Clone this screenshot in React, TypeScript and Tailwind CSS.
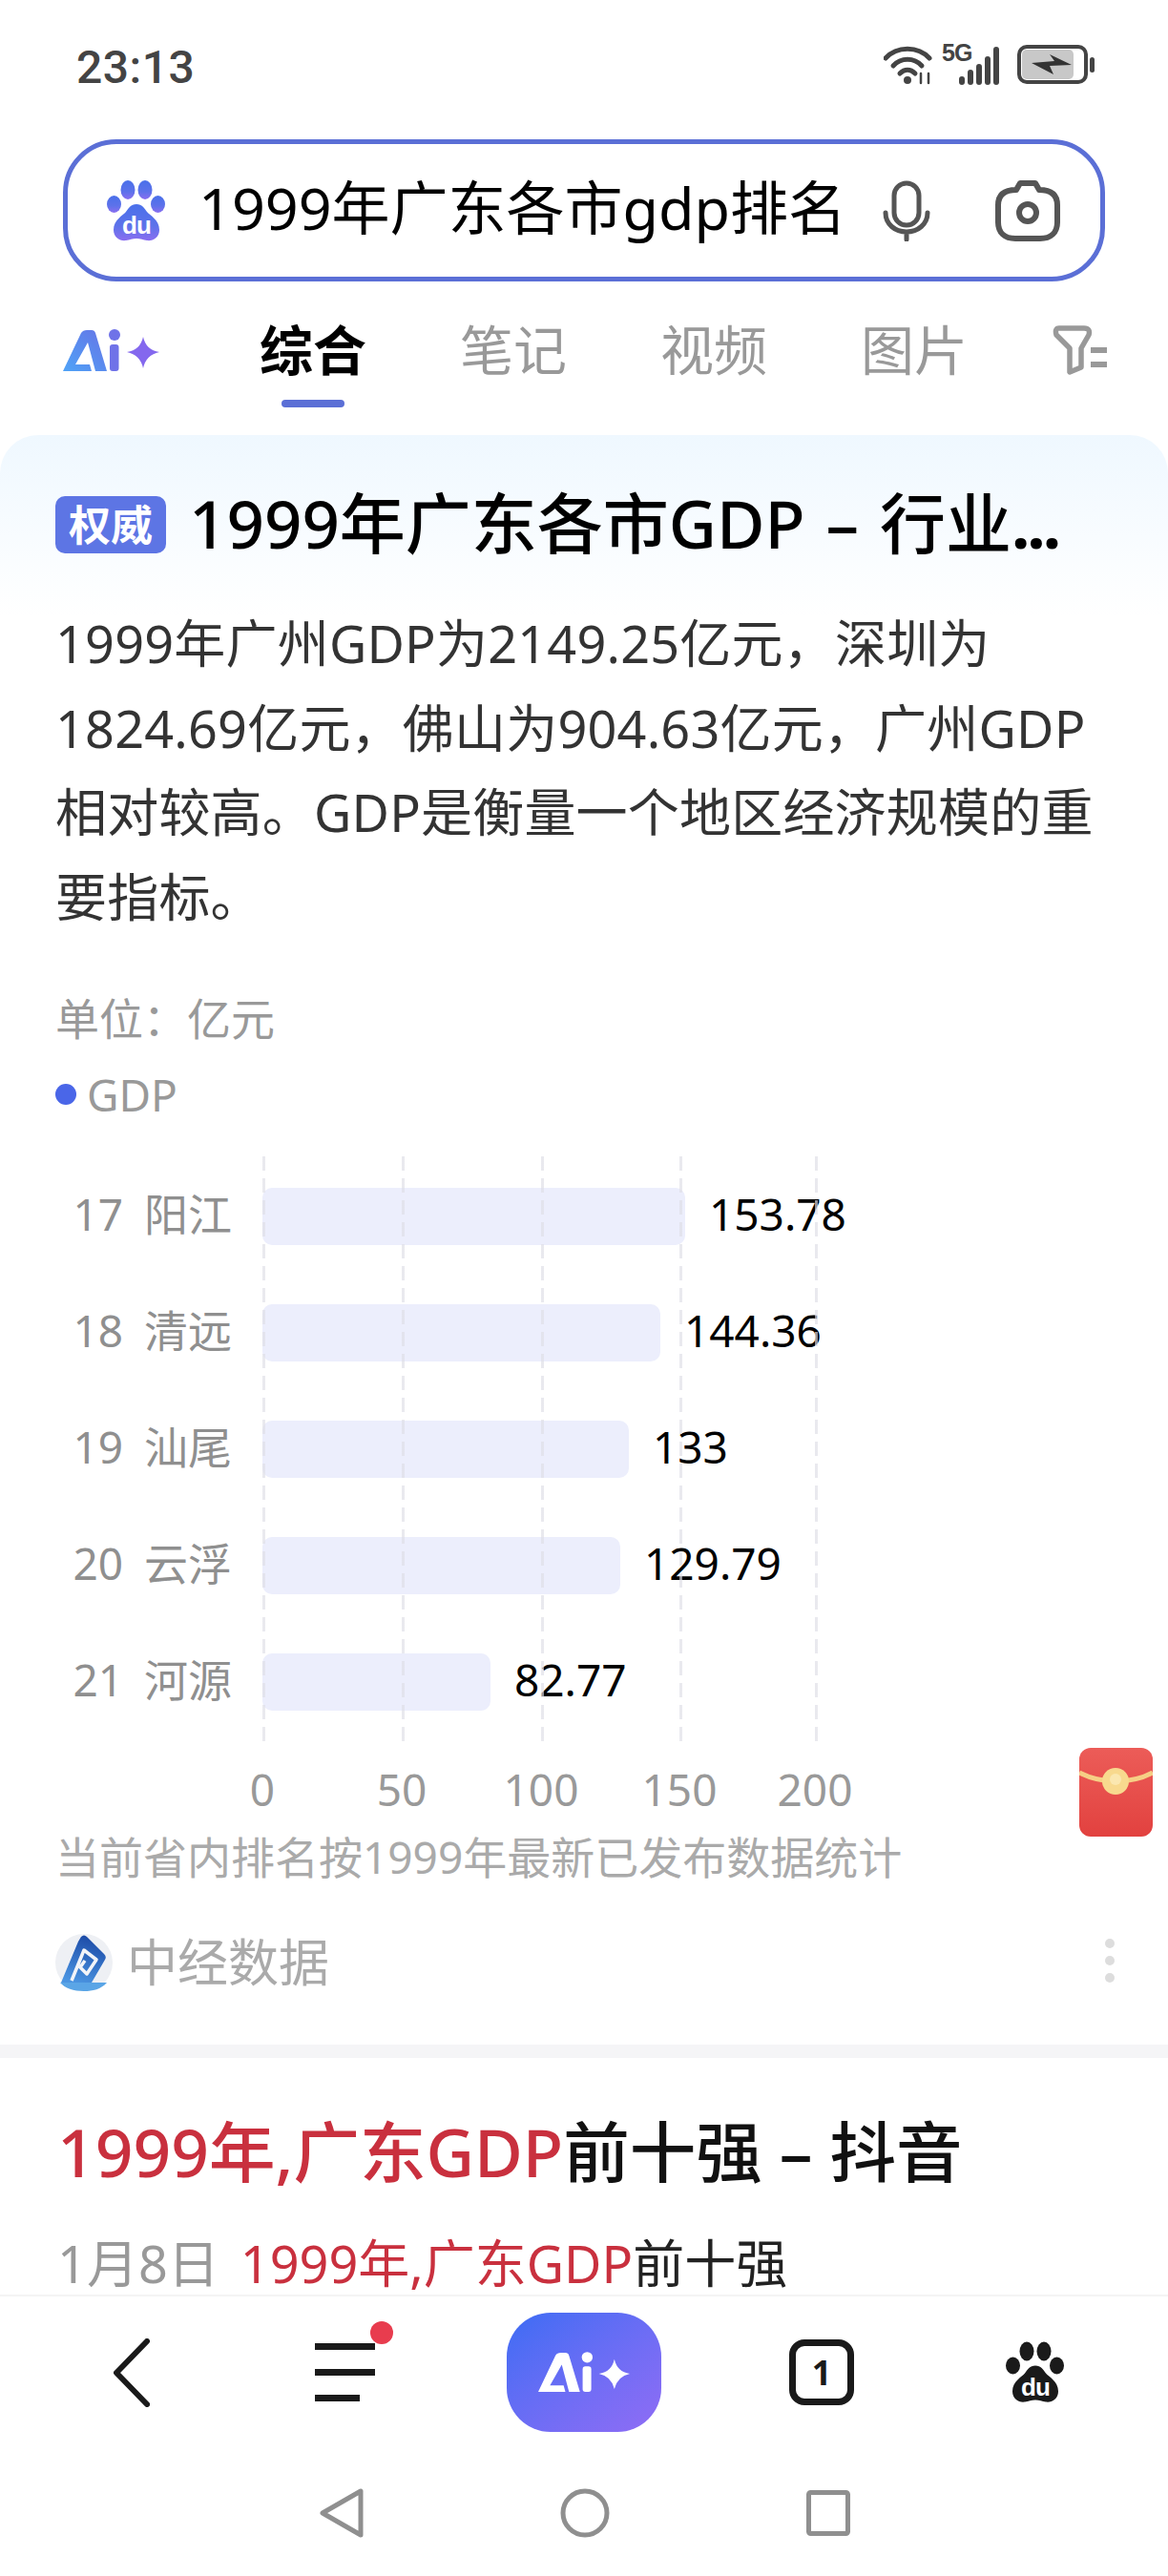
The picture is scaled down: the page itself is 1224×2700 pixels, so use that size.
const font = "font-['Noto_Sans','Noto_Sans_CJK_SC',sans-serif]"

const rows = [
  { rank: 17, city: '阳江', width: 443, value: '153.78' },
  { rank: 18, city: '清远', width: 417, value: '144.36' },
  { rank: 19, city: '汕尾', width: 384, value: '133' },
  { rank: 20, city: '云浮', width: 375, value: '129.79' },
  { rank: 21, city: '河源', width: 239, value: '82.77' },
]

const ticks = [
  { label: '0', x: 217 },
  { label: '50', x: 363 },
  { label: '100', x: 509 },
  { label: '150', x: 654 },
  { label: '200', x: 796 },
]

function Paw({ mono }: { mono?: boolean }) {
  const fill = mono ? '#1a1a1a' : 'url(#paw-grad)'
  return (
    <svg viewBox="0 0 61 64" className="w-full h-full">
      <defs>
        <linearGradient id="paw-grad" x1="0" y1="0" x2="0" y2="1">
          <stop offset="0" stopColor="#4a70ea" />
          <stop offset="0.6" stopColor="#5d72ea" />
          <stop offset="1" stopColor="#8a6ef0" />
        </linearGradient>
      </defs>
      <ellipse cx="7.5" cy="25" rx="7.5" ry="9" fill={fill} />
      <ellipse cx="22" cy="10" rx="7.5" ry="10" fill={fill} />
      <ellipse cx="40" cy="10" rx="7.5" ry="10" fill={fill} />
      <ellipse cx="53.5" cy="25" rx="7.5" ry="9" fill={fill} />
      <path d="M31 25c6 0 8 4 11 8 3 4 13 8 13 19 0 8-7 12-13 11-4-.7-7-2-11-2s-7 1.300-11 2c-6 1-13-3-13-11 0-11 10-15 13-19 3-4 5-8 11-8z" fill={fill} />
      <text x="31" y="56" textAnchor="middle" fontSize="26" fontWeight="700" fill="#fff" fontFamily="Liberation Sans, sans-serif" letterSpacing="-1">du</text>
    </svg>
  )
}

function AiMark({ white }: { white?: boolean }) {
  const a = white ? '#ffffff' : 'url(#ai-a)'
  const i = white ? '#ffffff' : '#6f72e8'
  const star = white ? '#ffffff' : '#8468ee'
  return (
    <svg viewBox="0 0 101 46" className="w-full h-full">
      <defs>
        <linearGradient id="ai-a" x1="0" y1="1" x2="1" y2="0">
          <stop offset="0" stopColor="#4fa3f7" />
          <stop offset="1" stopColor="#6674e6" />
        </linearGradient>
      </defs>
      <path d="M0 44 L19 4 Q21 1 25 1 L30 1 Q33 1 34 4 L46 44 L34 44 L26 14 L13 37 L28 37 L30 44 Z" fill={a} />
      <circle cx="54" cy="6" r="6" fill={i} />
      <rect x="49" y="16" width="9.500" height="28" rx="3" fill={i} />
      <path d="M84 8 Q87 22 101 24 Q87 27 84 41 Q81 27 67 24 Q81 22 84 8Z" fill={star} />
    </svg>
  )
}

function StatusIcons() {
  return (
    <div className="flex items-center text-[#444444]">
      <svg viewBox="0 0 52 42" className="w-[52px] h-[42px]" fill="none" stroke="#444" strokeLinecap="round">
        <path d="M2 14C14 1 36 1 48 14" strokeWidth="5" />
        <path d="M10 22C18 13 32 13 40 22" strokeWidth="5" />
        <path d="M17 30C22 25 28 25 33 30" strokeWidth="5" />
        <circle cx="25" cy="37" r="4" fill="#444" stroke="none" />
        <path d="M39 40V30M47 40V30" strokeWidth="2.500" />
      </svg>
      <div className="relative w-[60px] h-[42px] ml-[9px]">
        <span className="absolute left-0 top-[-5px] text-[25px] leading-[26px] font-bold tracking-[-1px] text-[#444] font-['Liberation_Sans',sans-serif]">5G</span>
        <div className="absolute right-0 bottom-0 flex items-end gap-[3px]">
          {[9, 16, 22, 30, 40].map(h => (
            <div key={h} className="w-[6px] rounded-[3px] bg-[#444]" style={{ height: h }} />
          ))}
        </div>
      </div>
      <svg viewBox="0 0 82 42" className="w-[82px] h-[42px] ml-[19px]">
        <rect x="2" y="2" width="70" height="37" rx="8" fill="#fff" stroke="#444" strokeWidth="4" />
        <rect x="5" y="5" width="54" height="31" rx="5" fill="#c8c8c8" />
        <path d="M15 19L39 17L34 10L57 21L34 22L38 31Z" fill="#333" />
        <rect x="76" y="13" width="5" height="16" rx="2.500" fill="#444" />
      </svg>
    </div>
  )
}

function Redpacket() {
  return (
    <div className="absolute left-[1131px] top-[1832px] w-[77px] h-[93px] rounded-[12px] bg-gradient-to-b from-[#ec5c58] to-[#e2413f] overflow-hidden">
      <svg viewBox="0 0 77 93" className="w-full h-full">
        <path d="M0 26C12 32 24 35 38 35C52 35 66 32 77 26" fill="none" stroke="#f6cf85" strokeWidth="5" />
        <circle cx="38" cy="35" r="14" fill="#f8d98e" />
        <circle cx="38" cy="33" r="6" fill="#fbe7b0" />
      </svg>
    </div>
  )
}

function SourceLogo() {
  return (
    <svg viewBox="0 0 60 60" className="w-[60px] h-[60px] shrink-0">
      <defs>
        <linearGradient id="src-grad" x1="0.6" y1="0" x2="0.3" y2="1">
          <stop offset="0" stopColor="#1c4aa6" />
          <stop offset="1" stopColor="#4b95e2" />
        </linearGradient>
      </defs>
      <circle cx="30" cy="30" r="30" fill="#eef0f4" />
      <path d="M27 3Q30 0 33 3L51 21Q54 24 52 27L38 51H6L24 8Z" fill="url(#src-grad)" />
      <path d="M17 49L30 17L43 27L33 42L26 35L31 28" fill="none" stroke="#f2f4f8" strokeWidth="3.500" strokeLinejoin="round" />
      <path d="M5 51H54C48 58 39 60 30 60C19 60 10 57 5 51Z" fill="#5aa5e6" />
    </svg>
  )
}

export default function App() {
  return (
    <div className={`relative w-[1224px] h-[2700px] bg-white overflow-hidden flex flex-col ${font}`}>
      {/* status bar */}
      <div className="h-[146px] shrink-0 flex items-start justify-between pl-[80px] pr-[76px] pt-[47px]">
        <span className="text-[48px] leading-[48px] font-medium text-[#444444] font-['Roboto',sans-serif] tracking-[0.5px]">23:13</span>
        <StatusIcons />
      </div>

      {/* search box */}
      <div className="mx-[66px] h-[149px] shrink-0 rounded-[56px] border-[5px] border-[#5b6fd6] flex items-center pl-[41px] pr-[42px]">
        <div className="w-[61px] h-[64px] shrink-0"><Paw /></div>
        <span className="ml-[35px] mt-[-5px] text-[61px] leading-[70px] text-black whitespace-nowrap">1999年广东各市gdp排名</span>
        <svg viewBox="0 0 50 64" className="ml-auto w-[50px] h-[64px]" fill="none" stroke="#555" strokeWidth="5" strokeLinecap="round">
          <rect x="12" y="3" width="26" height="44" rx="13" />
          <path d="M3 34C3 46 13 54 25 54C37 54 47 46 47 34M25 54V62" />
        </svg>
        <svg viewBox="0 0 68 64" className="ml-[68px] w-[68px] h-[64px]" fill="none" stroke="#555" strokeWidth="6" strokeLinejoin="round">
          <path d="M22 10L26 3H42L46 10C58 10 65 15 65 26V44C65 55 58 61 47 61H21C10 61 3 55 3 44V26C3 15 10 10 22 10Z" />
          <circle cx="34" cy="34" r="9" />
        </svg>
      </div>

      {/* tabs */}
      <div className="relative h-[161px] shrink-0 flex items-start pl-[66px] pt-[43px] overflow-hidden">
        <div className="w-[101px] h-[46px] mt-[7px] shrink-0"><AiMark /></div>
        <div className="ml-[105px] flex items-center gap-[98px] text-[56px] leading-[56px] text-[#999999] whitespace-nowrap">
          <span className="font-bold text-black w-[112px] text-center relative">
            综合
            <span className="absolute left-[23px] top-[81px] w-[66px] h-[8px] rounded-[4px] bg-[#5b6fd6]" />
          </span>
          <span className="w-[112px] text-center">笔记</span>
          <span className="w-[112px] text-center">视频</span>
          <span className="w-[112px] text-center">图片</span>
        </div>
        <svg viewBox="0 0 60 52" className="absolute left-[1100px] top-[46px] w-[60px] h-[52px]" fill="none" stroke="#999" strokeWidth="5.500" strokeLinejoin="round">
          <path d="M10 3H36Q43 3 41 10L33 24V44L21 49V24L7 10Q5 3 10 3Z" />
          <path d="M43 26H60M43 41H60" strokeWidth="6" />
        </svg>
      </div>

      {/* scrolling content */}
      <div className="flex-1 min-h-0">
        <div className="rounded-t-[40px] bg-gradient-to-b from-[#eff8ff] to-white to-[190px] px-[58px] pt-[54px] h-[1687px]">
          <div className="flex items-center h-[74px]">
            <span className="w-[116px] h-[60px] shrink-0 rounded-[10px] bg-[#5d75e4] text-white text-[44px] leading-[60px] font-bold text-center mt-[6px]">权威</span>
            <span className="ml-[24px] mt-[2px] text-[69px] leading-[74px] font-medium text-black whitespace-nowrap [word-spacing:4px]">1999年广东各市GDP – 行业<span className="tracking-[-3px] font-bold">...</span></span>
          </div>
          <p className="mt-[46px] w-[1110px] text-[54px] leading-[88.500px] tracking-[0.2px] text-[#333333]">
            1999年广州GDP为2149.25亿元，深圳为1824.69亿元，佛山为904.63亿元，广州GDP相对较高。GDP是衡量一个地区经济规模的重要指标。
          </p>
          <div className="mt-[55px] text-[46px] leading-[56px] text-[#999999]">单位：亿元</div>
          <div className="mt-[24px] flex items-center text-[46px] leading-[56px] text-[#999999]">
            <span className="w-[22px] h-[22px] rounded-full bg-[#4a66e8]" />
            <span className="ml-[11px]">GDP</span>
          </div>

          {/* chart */}
          <div className="relative mt-[37px] w-[1000px] h-[620px]">
            <div className="flex flex-col gap-[62px] pt-[33px]">
              {rows.map(r => (
                <div key={r.rank} className="flex items-center h-[60px]">
                  <span className="w-[217px] mb-[6px] flex justify-end pr-[32px] text-[46px] leading-[60px] text-[#8f8f8f] gap-[22px]">
                    <span>{r.rank}</span>
                    <span>{r.city}</span>
                  </span>
                  <div className="h-[60px] rounded-[10px] bg-[#eceefc]" style={{ width: r.width }} />
                  <span className="ml-[25px] mb-[6px] text-[46px] leading-[60px] text-black">{r.value}</span>
                </div>
              ))}
            </div>
            {ticks.map(t => (
              <div key={t.x} className="absolute top-0 bottom-0 w-[3px] bg-[repeating-linear-gradient(to_bottom,#dedee6a8_0,#dedee6a8_15px,transparent_15px,transparent_23px)]" style={{ left: t.x }} />
            ))}
          </div>
          <div className="relative h-[46px] mt-[20px] text-[46px] leading-[46px] text-[#999999]">
            {ticks.map(t => (
              <span key={t.x} className="absolute -translate-x-1/2" style={{ left: t.x }}>{t.label}</span>
            ))}
          </div>
          <div className="mt-[20px] text-[46px] leading-[56px] text-[#aaaaaa] whitespace-nowrap">当前省内排名按1999年最新已发布数据统计</div>
          <div className="mt-[51px] flex items-center h-[64px]">
            <SourceLogo />
            <span className="ml-[15px] text-[53px] leading-[64px] text-[#aaaaaa]">中经数据</span>
            <span className="ml-auto mr-[-2px] mt-[-4px] flex flex-col gap-[8px]">
              <span className="w-[10px] h-[10px] rounded-full bg-[#dddddd]" />
              <span className="w-[10px] h-[10px] rounded-full bg-[#dddddd]" />
              <span className="w-[10px] h-[10px] rounded-full bg-[#dddddd]" />
            </span>
          </div>
        </div>
        <div className="h-[14px] bg-[#f5f5f7]" />
        <div className="px-[60px] pt-[60px]">
          <div className="text-[69.500px] leading-[76px] font-medium text-[#111111] whitespace-nowrap">
            <span className="text-[#c9303e]">1999年,广东GDP</span>前十强 – 抖音
          </div>
          <div className="mt-[51px] text-[54px] leading-[56px] text-[#222222] whitespace-nowrap">
            <span className="text-[#999999]">1月8日</span>
            <span className="ml-[22px] text-[#c9303e]">1999年,广东GDP</span>前十强
          </div>
        </div>
      </div>

      {/* bottom nav */}
      <div className="relative h-[295px] shrink-0 bg-white border-t-[2px] border-[#f4f4f4]">
        <div className="relative flex items-center h-[125px] mt-[17px]">
          <svg viewBox="0 0 38 72" className="ml-[119px] w-[38px] h-[72px]" fill="none" stroke="#1a1a1a" strokeWidth="6" strokeLinecap="round" strokeLinejoin="round">
            <path d="M35 3L3 36L35 69" />
          </svg>
          <div className="relative ml-[173px] w-[63px] flex flex-col gap-[20px]">
            <div className="h-[7px] bg-[#1a1a1a]" />
            <div className="h-[7px] bg-[#1a1a1a]" />
            <div className="h-[7px] w-[47px] bg-[#1a1a1a]" />
            <span className="absolute left-[58px] top-[-23px] w-[24px] h-[24px] rounded-full bg-[#e83c4e]" />
          </div>
          <div className="ml-[138px] w-[162px] h-[125px] rounded-[46px] bg-gradient-to-br from-[#3a6cf4] to-[#8f6cf5] flex items-center justify-center">
            <div className="w-[96px] h-[44px]"><AiMark white /></div>
          </div>
          <div className="ml-[134px] w-[68px] h-[69px] rounded-[16px] border-[7px] border-[#1a1a1a] flex items-center justify-center">
            <span className="text-[36px] leading-[36px] font-bold text-[#1a1a1a]">1</span>
          </div>
          <div className="ml-[159px] w-[61px] h-[65px]"><Paw mono /></div>
        </div>
        <div className="flex items-center h-[54px] mt-[58px]">
          <svg viewBox="0 0 46 52" className="ml-[335px] w-[46px] h-[52px]" fill="none" stroke="#8f8f8f" strokeWidth="5" strokeLinejoin="round">
            <path d="M43 3V49L3 26Z" />
          </svg>
          <svg viewBox="0 0 52 52" className="ml-[206px] w-[52px] h-[52px]" fill="none" stroke="#8f8f8f" strokeWidth="5">
            <circle cx="26" cy="26" r="23" />
          </svg>
          <svg viewBox="0 0 46 48" className="ml-[206px] w-[46px] h-[48px]" fill="none" stroke="#8f8f8f" strokeWidth="5">
            <rect x="2.500" y="2.500" width="41" height="43" rx="2" />
          </svg>
        </div>
      </div>

      <Redpacket />
    </div>
  )
}
